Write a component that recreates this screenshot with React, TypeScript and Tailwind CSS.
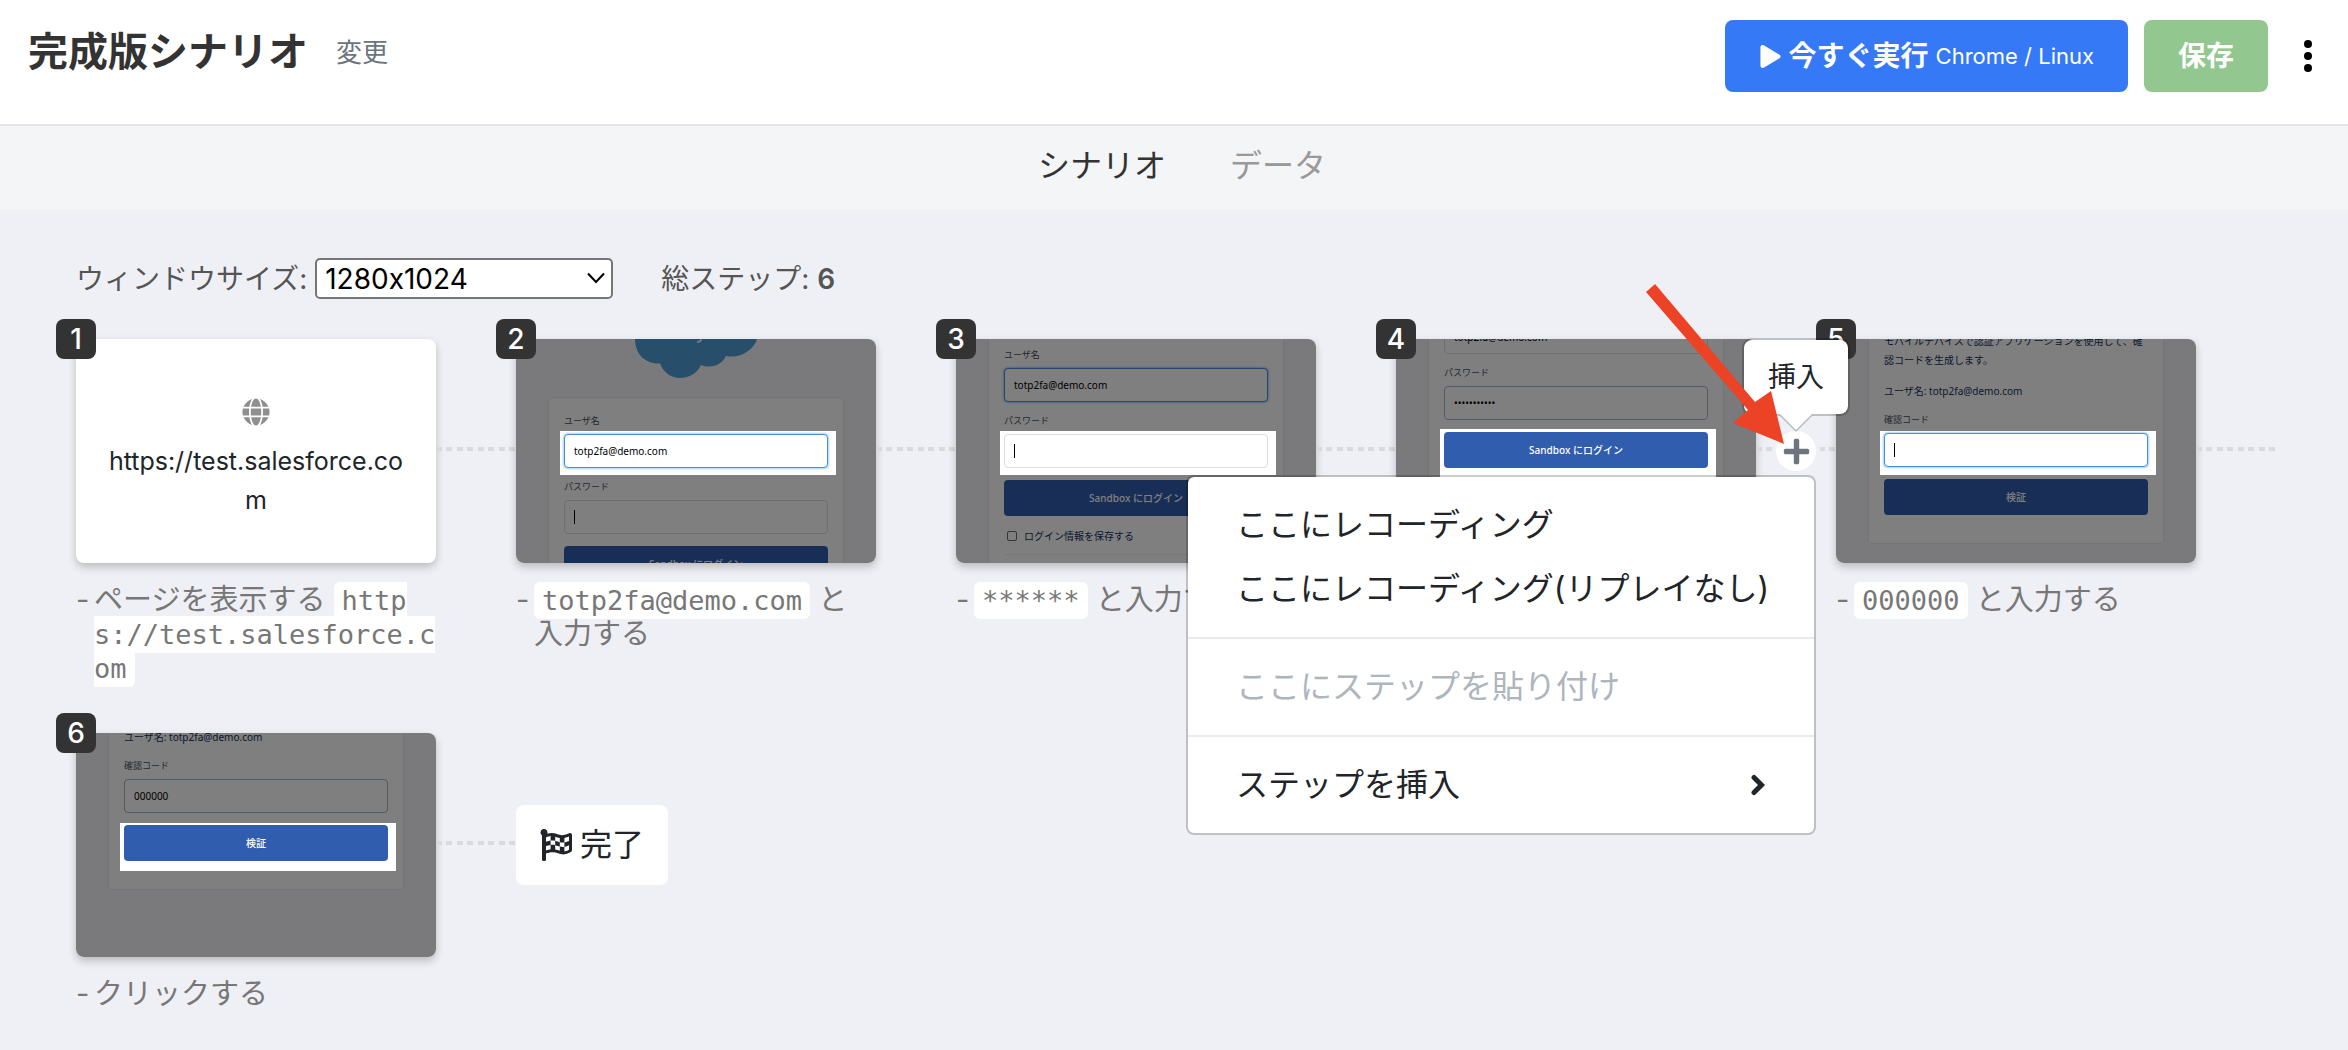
import { ReactNode } from "react";
import { FaFlagCheckered, FaGlobe, FaPlay, FaPlus } from "react-icons/fa";
import clsx from "clsx";

interface FieldProps {
  label: string;
  value?: string;
  type?: string;
  state?: "idle" | "focus" | "visited";
  caret?: boolean;
  className?: string;
}

const Field = ({
  label,
  value = "",
  type = "text",
  state = "idle",
  caret,
  className,
}: FieldProps) => (
  <label className={clsx("block", className)}>
    <span className="block text-[9px] leading-4 text-[#4a4f5c]">{label}</span>
    <span
      className={clsx(
        "mt-[5px] flex h-[34px] items-center rounded-sm border bg-white px-[9px]",
        state === "idle" && "border-[#dddddd]",
        state === "focus" && "border-[#4a8fdc] shadow-[0_0_3px_#4a9ff0]",
        state === "visited" && "border-[#a8b4c4]"
      )}
    >
      {caret && <span className="h-3.5 w-px shrink-0 bg-black" />}
      <input
        type={type}
        value={value}
        readOnly
        tabIndex={-1}
        className="w-full min-w-0 bg-transparent text-[10px] text-black outline-none"
      />
    </span>
  </label>
);

const SubmitButton = ({ children }: { children: ReactNode }) => (
  <button
    type="button"
    tabIndex={-1}
    className="mt-3 block h-9 w-full rounded-sm bg-[#315dae] text-[10px] font-medium text-white"
  >
    {children}
  </button>
);

interface LoginPageProps {
  className?: string;
  username?: FieldProps["state"];
  password?: FieldProps["state"];
  passwordValue?: string;
}

const LoginPage = ({
  className,
  username = "idle",
  password = "idle",
  passwordValue = "",
}: LoginPageProps) => (
  <div
    className={clsx(
      "mx-8 rounded-sm border border-[#e6e8ec] bg-white px-[15px] pt-[15px] pb-10",
      className
    )}
  >
    <Field label="ユーザ名" value="totp2fa@demo.com" state={username} />
    <Field
      label="パスワード"
      type="password"
      value={passwordValue}
      state={password}
      caret={!passwordValue}
      className="mt-[11px]"
    />
    <SubmitButton>Sandbox にログイン</SubmitButton>
    <label className="mt-2.5 flex h-5 items-center gap-[7px] pl-[3px] text-[10px] text-[#16325c]">
      <input
        type="checkbox"
        tabIndex={-1}
        className="size-2.5 appearance-none rounded-[2px] border border-[#6b6b6b]"
      />
      ログイン情報を保存する
    </label>
    <div className="mt-2 border-t border-[#f0f0f0]" />
  </div>
);

interface VerifyPageProps {
  className?: string;
  code?: string;
}

const VerifyPage = ({ className, code = "" }: VerifyPageProps) => (
  <div
    className={clsx(
      "mx-8 rounded-sm border border-[#e6e8ec] bg-white px-[15px] pb-7 text-[10px] leading-[19px] text-[#16325c]",
      className
    )}
  >
    <p>
      モバイルデバイスで認証アプリケーションを使用して、確認コードを生成します。
    </p>
    <p className="mt-3">ユーザ名: totp2fa@demo.com</p>
    <Field
      label="確認コード"
      value={code}
      caret={!code}
      state={code ? "visited" : "focus"}
      className="mt-[11px]"
    />
    <SubmitButton>検証</SubmitButton>
  </div>
);

const Cloud = () => (
  <svg className="mx-auto block" width="124" height="39" viewBox="0 0 124 39">
    <path
      d="M1 0C1 14 10 25 26 24.500C29 33 37 39 46 39C56 39 64 33 67 26C77 30 88 26 92 17C106 20 120 11 123 0Z"
      fill="#4f9fd8"
    />
    <path d="M63 3Q67 3 67 0" stroke="#e8f2fa" strokeWidth="2" fill="none" />
  </svg>
);

const Code = ({ children }: { children: ReactNode }) => (
  <code className="rounded-md bg-white px-2 py-[3px] font-['DejaVu_Sans_Mono',monospace] text-[27px] leading-6 break-all">
    {children}
  </code>
);

// Frame of a recorded page; everything outside the target element is dimmed
const Shot = ({
  target,
  children,
}: {
  target: string;
  children: ReactNode;
}) => (
  <div className="relative h-full overflow-hidden rounded-lg bg-[#f4f5f8] font-['Noto_Sans','Noto_Sans_CJK_JP',sans-serif]">
    <div className="flow-root">{children}</div>
    <div
      className={clsx(
        "absolute left-11 w-[276px] shadow-[0_0_0_400px_rgba(0,0,0,0.5)]",
        target
      )}
    />
  </div>
);

interface StepProps {
  index: number;
  caption: ReactNode;
  connector?: ReactNode;
  children: ReactNode;
}

const Step = ({ index, caption, connector, children }: StepProps) => (
  <li className="w-[440px]">
    <div className="flex">
      <div className="relative h-56 w-[360px] rounded-lg bg-white shadow-[0_4px_8px_rgba(0,0,0,0.22)]">
        {children}
        <span className="absolute -top-5 -left-5 flex size-10 items-center justify-center rounded-lg bg-[#333333] text-[28px] font-medium text-white">
          {index}
        </span>
      </div>
      <Connector>{connector}</Connector>
    </div>
    <div className="mt-5 flex w-[360px] text-[29px] leading-[34px] text-[#777777]">
      <span className="w-[18px] shrink-0">-</span>
      <p className="min-w-0 flex-1">{caption}</p>
    </div>
  </li>
);

const Connector = ({ children }: { children?: ReactNode }) => (
  <div className="relative flex h-56 w-20 items-center justify-center">
    <div className="mb-1 h-1 w-full bg-[repeating-linear-gradient(90deg,#d9dade_0_6px,transparent_6px_10px,#d9dade_10px_16px,transparent_16px_21px)]" />
    {children}
  </div>
);

const menuItem =
  "flex h-16 w-full items-center justify-between px-12 text-left text-[32px] whitespace-nowrap disabled:text-[#adb5bd]";

const InsertMenu = () => (
  <div className="absolute inset-0 z-10 flex items-center justify-center text-[#212529]">
    <button
      type="button"
      aria-label="挿入"
      className="flex size-10 items-center justify-center rounded-full bg-white text-[#6c757d] ring-4 ring-[#eff0f5]"
    >
      <FaPlus size={29} />
    </button>

    <div
      role="tooltip"
      className="absolute bottom-[147px] left-1/2 -translate-x-1/2 rounded-[10px] border-2 border-black/20 bg-white bg-clip-padding px-6 py-4 text-[28px] leading-[42px] whitespace-nowrap"
    >
      挿入
      <svg
        className="absolute top-full left-1/2 -translate-x-1/2"
        width="36"
        height="18"
        viewBox="0 0 36 18"
      >
        <path d="M0 0H36L18 18Z" fill="#b9babd" />
        <path d="M2 0H34L18 16Z" fill="#ffffff" />
      </svg>
    </div>

    <div
      role="menu"
      className="absolute top-[136px] right-5 w-[630px] rounded-lg border-2 border-black/20 bg-white bg-clip-padding"
    >
      <div className="py-4">
        <button type="button" role="menuitem" className={menuItem}>
          ここにレコーディング
        </button>
        <button type="button" role="menuitem" className={menuItem}>
          ここにレコーディング(リプレイなし)
        </button>
      </div>
      <div className="border-y-2 border-[#e9e9ef] py-4">
        <button type="button" role="menuitem" disabled className={menuItem}>
          ここにステップを貼り付け
        </button>
      </div>
      <div className="py-4">
        <button type="button" role="menuitem" className={menuItem}>
          ステップを挿入
          <svg width="16" height="22" viewBox="0 0 16 22">
            <path
              d="M4 3.500L11.500 11L4 18.500"
              stroke="currentColor"
              strokeWidth="5"
              strokeLinecap="round"
              fill="none"
            />
          </svg>
        </button>
      </div>
    </div>

    <svg
      className="absolute -top-14 right-[52px]"
      width="140"
      height="162"
      viewBox="0 0 140 162"
    >
      <path
        d="M2 9L11 1L111 119L127 108L140 161L89 140L104 127Z"
        fill="#ec4226"
      />
    </svg>
  </div>
);

const Header = () => (
  <header className="flex items-start justify-between border-b-2 border-[#e4e5e8] bg-white pt-5 pr-9 pb-8 pl-7">
    <div className="flex h-16 items-center gap-7">
      <h1 className="text-[40px] font-bold text-[#333333]">
        完成版シナリオ
      </h1>
      <a href="#rename" className="text-[26px] text-[#6c757d]">
        変更
      </a>
    </div>
    <div className="flex items-center gap-4">
      <button
        type="button"
        className="flex h-[72px] items-center gap-[7px] rounded-lg bg-[#3579f6] px-[34px] text-[28px] font-bold text-white"
      >
        <FaPlay size={23} />
        今すぐ実行
        <span className="text-[22px] font-normal">Chrome / Linux</span>
      </button>
      <button
        type="button"
        className="h-[72px] rounded-lg bg-[#92c78f] px-[34px] text-[28px] font-bold text-white"
      >
        保存
      </button>
      <button type="button" aria-label="メニュー" className="ml-5">
        <svg width="8" height="32" viewBox="0 0 8 32">
          <circle cx="4" cy="4" r="4" />
          <circle cx="4" cy="16" r="4" />
          <circle cx="4" cy="28" r="4" />
        </svg>
      </button>
    </div>
  </header>
);

export default function App() {
  return (
    <div className="min-h-screen bg-[#eff0f5] font-['Inter','Noto_Sans_CJK_JP',sans-serif] [font-feature-settings:'calt'_0]">
      <Header />
      <nav className="flex h-[84px] items-center justify-center gap-16 bg-[#f4f5f7] pb-1 pl-4 text-[32px]">
        <a href="#scenario" className="text-[#333333]">
          シナリオ
        </a>
        <a href="#data" className="text-[#999999]">
          データ
        </a>
      </nav>

      <main className="pt-12 pr-[72px] pl-[76px]">
        <div className="flex items-center text-[28px] leading-10 text-[#555555]">
          <label htmlFor="window-size">ウィンドウサイズ:</label>
          <div className="relative ml-2">
            <select
              id="window-size"
              className="block h-[41px] w-[298px] appearance-none rounded-[5px] border-2 border-[#767676] bg-white px-2 text-[28px] leading-9 text-black [font-feature-settings:'calt'_0]"
            >
              <option>1280x1024</option>
            </select>
            <svg
              className="pointer-events-none absolute top-3.5 right-2"
              width="18"
              height="12"
              viewBox="0 0 18 12"
            >
              <path
                d="M1 1.500L9 10L17 1.500"
                stroke="#000000"
                strokeWidth="2"
                fill="none"
              />
            </svg>
          </div>
          <p className="ml-12">
            総ステップ: <span className="font-semibold">6</span>
          </p>
        </div>

        <ol className="mt-10 flex flex-wrap gap-y-12">
          <Step
            index={1}
            caption={
              <>
                ページを表示する <Code>https://test.salesforce.com</Code>
              </>
            }
          >
            <div className="flex h-full flex-col items-center justify-center gap-4 px-7 pt-4 text-center">
              <FaGlobe size={28} className="text-[#8f8f8f]" />
              <p className="text-[25px] leading-[39px] break-all text-[#212529]">
                https://test.salesforce.com
              </p>
            </div>
          </Step>
          <Step
            index={2}
            caption={
              <>
                <Code>totp2fa@demo.com</Code> と入力する
              </>
            }
          >
            <Shot target="top-[92px] h-11">
              <Cloud />
              <LoginPage className="mt-[19px]" username="focus" />
            </Shot>
          </Step>
          <Step
            index={3}
            caption={
              <>
                <Code>******</Code> と入力する
              </>
            }
          >
            <Shot target="top-[92px] h-11">
              <LoginPage className="-mt-2" username="focus" />
            </Shot>
          </Step>
          <Step index={4} caption="クリックする" connector={<InsertMenu />}>
            <Shot target="top-[90px] h-12">
              <LoginPage
                className="-mt-14"
                password="visited"
                passwordValue="password123"
              />
            </Shot>
          </Step>
          <Step
            index={5}
            caption={
              <>
                <Code>000000</Code> と入力する
              </>
            }
          >
            <Shot target="top-[92px] h-11">
              <VerifyPage className="-mt-2" />
            </Shot>
          </Step>
          <Step index={6} caption="クリックする">
            <Shot target="top-[90px] h-12">
              <VerifyPage className="-mt-14" code="000000" />
            </Shot>
          </Step>
          <li className="flex h-56 items-center">
            <div className="flex h-20 items-center gap-2 rounded-lg bg-white px-6 text-[32px] text-[#212529]">
              <FaFlagCheckered size={32} />
              完了
            </div>
          </li>
        </ol>
      </main>
    </div>
  );
}
